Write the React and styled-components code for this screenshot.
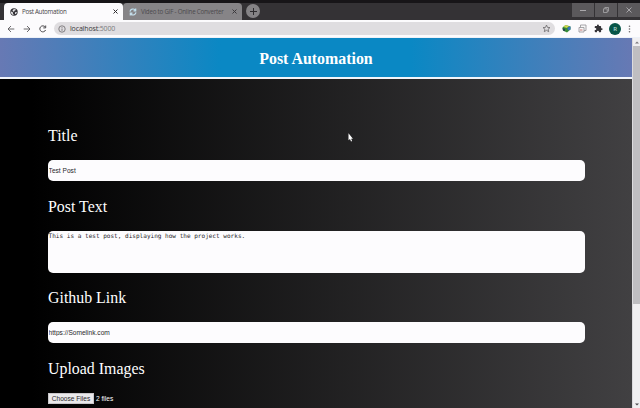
import React from 'react';
import styled, { createGlobalStyle } from 'styled-components';

const Global = createGlobalStyle`
  * { box-sizing: border-box; }
  body { margin: 0; overflow: hidden; background: #000; }
`;
const Browser = styled.div`
  width: 640px;
  height: 408px;
  display: flex;
  flex-direction: column;
  overflow: hidden;
  font-family: 'Open Sans', 'Noto Sans', sans-serif;
`;
const TabStrip = styled.div`
  height: 20px;
  flex: none;
  display: flex;
  align-items: flex-start;
  padding: 3px 0 0 4px;
  background: linear-gradient(#171518 0 3px, #343235 3px);
`;
const Tab = styled.div`
  width: ${(p) => p.$width}px;
  height: 17px;
  display: flex;
  align-items: center;
  padding: 0 5px 0 6px;
  gap: 4px;
  border-radius: 4px 4px 0 0;
  background: ${(p) => (p.$active ? '#fcfbfd' : '#868487')};
  color: ${(p) => (p.$active ? '#444246' : '#4c4a4d')};
  svg { flex: none; }
`;
const TabTitle = styled.span`
  flex: 1;
  min-width: 0;
  font-size: 6.2px;
  letter-spacing: ${(p) => p.$tracking}px;
  line-height: 10px;
  white-space: nowrap;
`;
const NewTab = styled.div`
  width: 14px;
  height: 14px;
  margin: 1px 0 0 4px;
  border-radius: 50%;
  background: #858386;
  display: grid;
  place-items: center;
`;
const WindowControls = styled.div`
  margin-left: auto;
  display: flex;
  gap: 1px;
`;
const WindowButton = styled.div`
  width: 22px;
  height: 14px;
  display: grid;
  place-items: center;
  background: #5b595c;
`;
const Toolbar = styled.div`
  height: 18px;
  flex: none;
  display: flex;
  align-items: center;
  padding: 0 9px 0 6px;
  background: #fcfbfd;
  border-bottom: 1px solid #edf1f8;
`;
const NavButtons = styled.div`
  width: 48px;
  display: flex;
  gap: 6px;
`;
const Address = styled.div`
  width: 501px;
  height: 13px;
  flex: none;
  display: flex;
  align-items: center;
  gap: 4px;
  padding: 0 4px 0 4px;
  border-radius: 7px;
  background: #dfdde0;
`;
const Url = styled.span`
  flex: 1;
  font-size: 7px;
  letter-spacing: -0.15px;
  line-height: 10px;
  color: #3a383b;
  span { color: #7b797c; }
`;
const Extensions = styled.div`
  flex: 1;
  display: flex;
  align-items: center;
  justify-content: space-between;
  padding-left: 7px;
`;
const Avatar = styled.div`
  width: 12px;
  height: 12px;
  border-radius: 50%;
  background: #075548;
  color: #b3d6cf;
  font-size: 6px;
  font-weight: 600;
  line-height: 12px;
  text-align: center;
`;
const Viewport = styled.div`
  flex: 1;
  min-height: 0;
  display: flex;
`;
const Page = styled.div`
  width: 632px;
  display: flex;
  flex-direction: column;
  background: linear-gradient(90deg, #000 0%, #000 5%, #414042 100%);
  font-family: 'Liberation Serif', serif;
  color: #fff;
`;
const Header = styled.header`
  height: 41px;
  flex: none;
  border-bottom: 2px solid #f2f5fa;
  background: linear-gradient(90deg, #6779b4 0%, #0a88c4 35%, #0a88c4 65%, #6779b4 100%);
`;
const Heading = styled.h1`
  margin: 0;
  font-size: 15.9px;
  line-height: 41px;
  text-align: center;
`;
const Form = styled.div`
  display: flex;
  flex-direction: column;
  padding: 45px 47px 0 48px;
`;
const Label = styled.label`
  font-size: 15.9px;
  line-height: 24px;
  height: 24px;
`;
const fieldFont = `font-family: 'Liberation Sans', sans-serif; font-size: 6.6px;`;
const Input = styled.input`
  height: 21px;
  margin: 12px 0 14px;
  padding: 0 0.6px;
  border: 0;
  border-radius: 5px;
  background: #fdfcfe;
  color: #29272a;
  ${fieldFont}
`;
const TextArea = styled.textarea`
  height: 42px;
  margin: 12px 0 13px;
  padding: 1px 0.6px;
  border: 0;
  border-radius: 5px;
  resize: none;
  background: #fdfcfe;
  color: #29272a;
  font: 6.05px/8px 'DejaVu Sans Mono', monospace;
`;
const FileRow = styled.div`
  display: flex;
  align-items: center;
  gap: 2px;
  margin-top: 12px;
  ${fieldFont}
`;
const FileButton = styled.button`
  width: 46px;
  height: 11px;
  padding: 0;
  border: 1px solid #c9c7ca;
  background: #eae9eb;
  color: #29272a;
  ${fieldFont}
  line-height: 9px;
`;
const Scrollbar = styled.div`
  width: 8px;
  display: flex;
  flex-direction: column;
  background: #f0eff1;
  border-left: 1px solid #dcdbde;
`;
const Arrow = styled.div`
  height: 8px;
  flex: none;
  display: grid;
  place-items: center;
  margin-top: ${(p) => (p.$end ? 'auto' : '0')};
`;
const Thumb = styled.div`
  height: 258px;
  background: #bfbec1;
`;
const Pointer = styled.svg`
  position: absolute;
  left: 348px;
  top: 133px;
`;

const Close = ({ color }) => (
  <svg width="5" height="5" viewBox="0 0 5 5" stroke={color} strokeWidth="1"><path d="M.5.5l4 4M4.5.5l-4 4" /></svg>
);
const Globe = () => (
  <svg width="8" height="8" viewBox="0 0 8 8">
    <circle cx="4" cy="4" r="3.7" fill="#353338" />
    <path d="M1 3.5l1.8.8.2 1.5.9 1.2C2 7 .7 5.500 1 3.500zM4 .9l2 .6-.8 1-.9.2-.2 1-1.100-.3L2.500 2.300zM5 4.200l2-.2-.8 1.800-1.200.2z" fill="#e8e8ea" />
  </svg>
);
const Sync = () => (
  <svg width="8" height="8" viewBox="0 0 8 8" fill="none" strokeWidth="1.2">
    <path d="M1 3.600A3 3 0 0 1 6.200 2M6.700.500v2.300H4.500" stroke="#bfe0ef" />
    <path d="M7 4.400A3 3 0 0 1 1.800 6M1.300 7.500V5.200h2.200" stroke="#c4deeb" />
  </svg>
);

export default function App() {
  return (
    <Browser>
      <Global />
      <TabStrip>
        <Tab $active $width={119}>
          <Globe /><TabTitle $tracking={-0.25}>Post Automation</TabTitle><Close color="#2d2b2e" />
        </Tab>
        <Tab $width={119}>
          <Sync /><TabTitle $tracking={-0.22}>Video to GIF - Online Converter</TabTitle><Close color="#3b393c" />
        </Tab>
        <NewTab>
          <svg width="7" height="7" stroke="#2d2b2e"><path d="M3.5 0v7M0 3.5h7" /></svg>
        </NewTab>
        <WindowControls>
          <WindowButton><svg width="6" height="6" stroke="#aaa8ab"><path d="M0 3.500h6" /></svg></WindowButton>
          <WindowButton><svg width="6" height="6" fill="none" stroke="#aaa8ab" strokeWidth=".8"><path d="M.5 1.800h3.700v3.700H.5zM1.800 1.800V.5h3.700v3.700H4.200" /></svg></WindowButton>
          <WindowButton><svg width="6" height="6" stroke="#bbb9bc" strokeWidth=".8"><path d="M.5.5l5 5M5.500.5l-5 5" /></svg></WindowButton>
        </WindowControls>
      </TabStrip>
      <Toolbar>
        <NavButtons>
          <svg width="10" height="8" fill="none" stroke="#5b595c" strokeWidth=".9"><path d="M8.300 4H2M5 1L2 4l3 3" /></svg>
          <svg width="10" height="8" fill="none" stroke="#5b595c" strokeWidth=".9"><path d="M1.700 4H8M5 1l3 3-3 3" /></svg>
          <svg width="10" height="8" fill="none" stroke="#4b494c"><path d="M7.200 2A3 3 0 1 0 7.600 5M7.700.500v2.400H5.300" /></svg>
        </NavButtons>
        <Address>
          <svg width="8" height="8" fill="none" stroke="#69676a" strokeWidth=".8"><circle cx="4" cy="4" r="3.200" /><path d="M4 3.500v2.300M4 2v.8" /></svg>
          <Url>localhost<span>:5000</span></Url>
          <svg width="9" height="9" viewBox="0 0 9 9" fill="none" stroke="#69676a" strokeWidth=".8"><path d="M4.500 1l1 2.400 2.500.2L6.100 5.200l.6 2.500-2.200-1.400-2.200 1.400.6-2.500L1 3.600l2.500-.2z" /></svg>
        </Address>
        <Extensions>
          <svg width="9" height="9" viewBox="0 0 9 9"><path d="M.5 3.500L3.500 1 8.500 2.500v3L5 8.500 1 6.500z" fill="#378c35" /><path d="M3.500 1L7 2 5 4 1.500 3z" fill="#d0d64f" /><path d="M5.500 3.500L8.500 2.500v3L6 6.500z" fill="#3773c0" /><path d="M.5 4l2.500 1v2.300L1 6.500z" fill="#254552" /></svg>
          <svg width="9" height="9" viewBox="0 0 9 9" fill="#f7f7f8" stroke="#929094" strokeWidth=".8"><path d="M2.500 1H8v5.500H2.500z" /><path d="M1 3.500h5V8H1z" /><path d="M2 6h2.500" stroke="#bf5552" /></svg>
          <svg width="9" height="9" viewBox="0 0 24 24" fill="#353338"><path d="M20.500 11H19V7c0-1.100-.9-2-2-2h-4V3.500a2.500 2.500 0 0 0-5 0V5H4a2 2 0 0 0-2 2v3.800h1.500a2.700 2.700 0 0 1 0 5.400H2V20c0 1.100.9 2 2 2h3.800v-1.500a2.700 2.700 0 0 1 5.400 0V22H17a2 2 0 0 0 2-2v-4h1.500a2.500 2.500 0 0 0 0-5z" /></svg>
          <Avatar>R</Avatar>
          <svg width="3" height="8" fill="#69676a"><circle cx="1.500" cy="1.200" r=".8" /><circle cx="1.500" cy="4" r=".8" /><circle cx="1.500" cy="6.800" r=".8" /></svg>
        </Extensions>
      </Toolbar>
      <Viewport>
        <Page>
          <Header><Heading>Post Automation</Heading></Header>
          <Form>
            <Label>Title</Label>
            <Input defaultValue="Test Post" />
            <Label>Post Text</Label>
            <TextArea spellCheck={false} defaultValue="This is a test post, displaying how the project works." />
            <Label>Github Link</Label>
            <Input defaultValue="https://Somelink.com" />
            <Label>Upload Images</Label>
            <FileRow><FileButton>Choose Files</FileButton>2 files</FileRow>
          </Form>
        </Page>
        <Scrollbar>
          <Arrow><svg width="4" height="3" fill="#7b797c"><path d="M0 2.500L2 .500l2 2z" /></svg></Arrow>
          <Thumb />
          <Arrow $end><svg width="4" height="3" fill="#4b494c"><path d="M0 .500h4l-2 2z" /></svg></Arrow>
        </Scrollbar>
      </Viewport>
      <Pointer width="5" height="9" viewBox="0 0 5 9"><path d="M.5.3v7l1.500-1.200 1 2.300 1.100-.5-1-2.200h1.800z" fill="#fff" /></Pointer>
    </Browser>
  );
}
